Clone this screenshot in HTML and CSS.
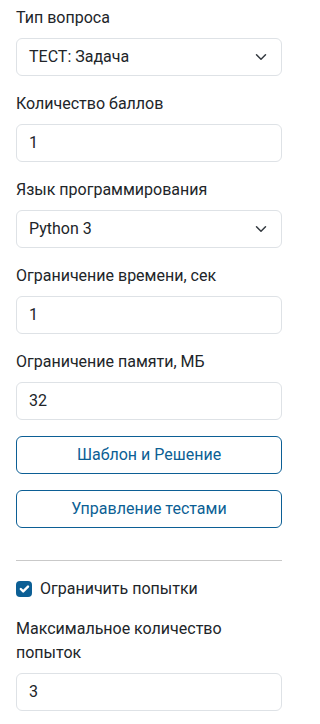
FILE: index.html
```html
<!DOCTYPE html>
<html lang="ru">
<head>
<meta charset="utf-8">
<link rel="stylesheet" href="styles.css">
</head>
<body>
<div class="panel">
  <div class="group">
    <label class="form-label">Тип вопроса</label>
    <div class="select">ТЕСТ: Задача
      <svg class="chev" viewBox="0 0 16 16" width="16" height="12"><path d="m2 5 6 6 6-6" fill="none" stroke="#343a40" stroke-width="2" stroke-linecap="round" stroke-linejoin="round"/></svg>
    </div>
  </div>
  <div class="group">
    <label class="form-label">Количество баллов</label>
    <div class="input">1</div>
  </div>
  <div class="group">
    <label class="form-label">Язык программирования</label>
    <div class="select">Python 3
      <svg class="chev" viewBox="0 0 16 16" width="16" height="12"><path d="m2 5 6 6 6-6" fill="none" stroke="#343a40" stroke-width="2" stroke-linecap="round" stroke-linejoin="round"/></svg>
    </div>
  </div>
  <div class="group">
    <label class="form-label">Ограничение времени, сек</label>
    <div class="input">1</div>
  </div>
  <div class="group">
    <label class="form-label">Ограничение памяти, МБ</label>
    <div class="input">32</div>
  </div>
  <div class="group">
    <button class="btn">Шаблон и Решение</button>
  </div>
  <div class="group">
    <button class="btn">Управление тестами</button>
  </div>
  <hr class="divider">
  <div class="group check">
    <span class="box"><svg viewBox="0 0 20 20" width="16" height="16"><path d="m6 10 3 3 6-6" fill="none" stroke="#fff" stroke-width="3" stroke-linecap="round" stroke-linejoin="round"/></svg></span>
    <span class="check-label">Ограничить попытки</span>
  </div>
  <div class="group">
    <label class="form-label">Максимальное количество попыток</label>
    <div class="input">3</div>
  </div>
</div>
</body>
</html>
```

FILE: styles.css
```css
* { box-sizing: border-box; }
html, body { margin: 0; padding: 0; background: #fff; }
body {
  font-family: Roboto, "Liberation Sans", sans-serif;
  font-size: 16px;
  line-height: 24px;
  color: #212529;
}
.panel {
  width: 298px;
  padding: 6px 16px 0 16px;
}
.group { margin-bottom: 16px; }
.form-label {
  display: block;
  margin-bottom: 8px;
}
.select, .input {
  position: relative;
  height: 38px;
  padding: 6px 12px;
  border: 1px solid #dee2e6;
  border-radius: 6px;
  background: #fff;
}
.chev {
  position: absolute;
  right: 12px;
  top: 12px;
}
.btn {
  display: block;
  width: 100%;
  height: 38px;
  padding: 6px 12px;
  font: inherit;
  color: #0c5f95;
  background: #fff;
  border: 1px solid #0c5f95;
  border-radius: 6px;
  text-align: center;
}
.divider {
  margin: 32px 0 16px;
  border: 0;
  border-top: 1px solid #c9c9c9;
}
.check {
  display: flex;
  align-items: flex-start;
  min-height: 24px;
}
.box {
  width: 16px;
  height: 16px;
  margin-top: 4px;
  margin-right: 8px;
  border-radius: 4px;
  background: #0c5f95;
  display: flex;
}
```
